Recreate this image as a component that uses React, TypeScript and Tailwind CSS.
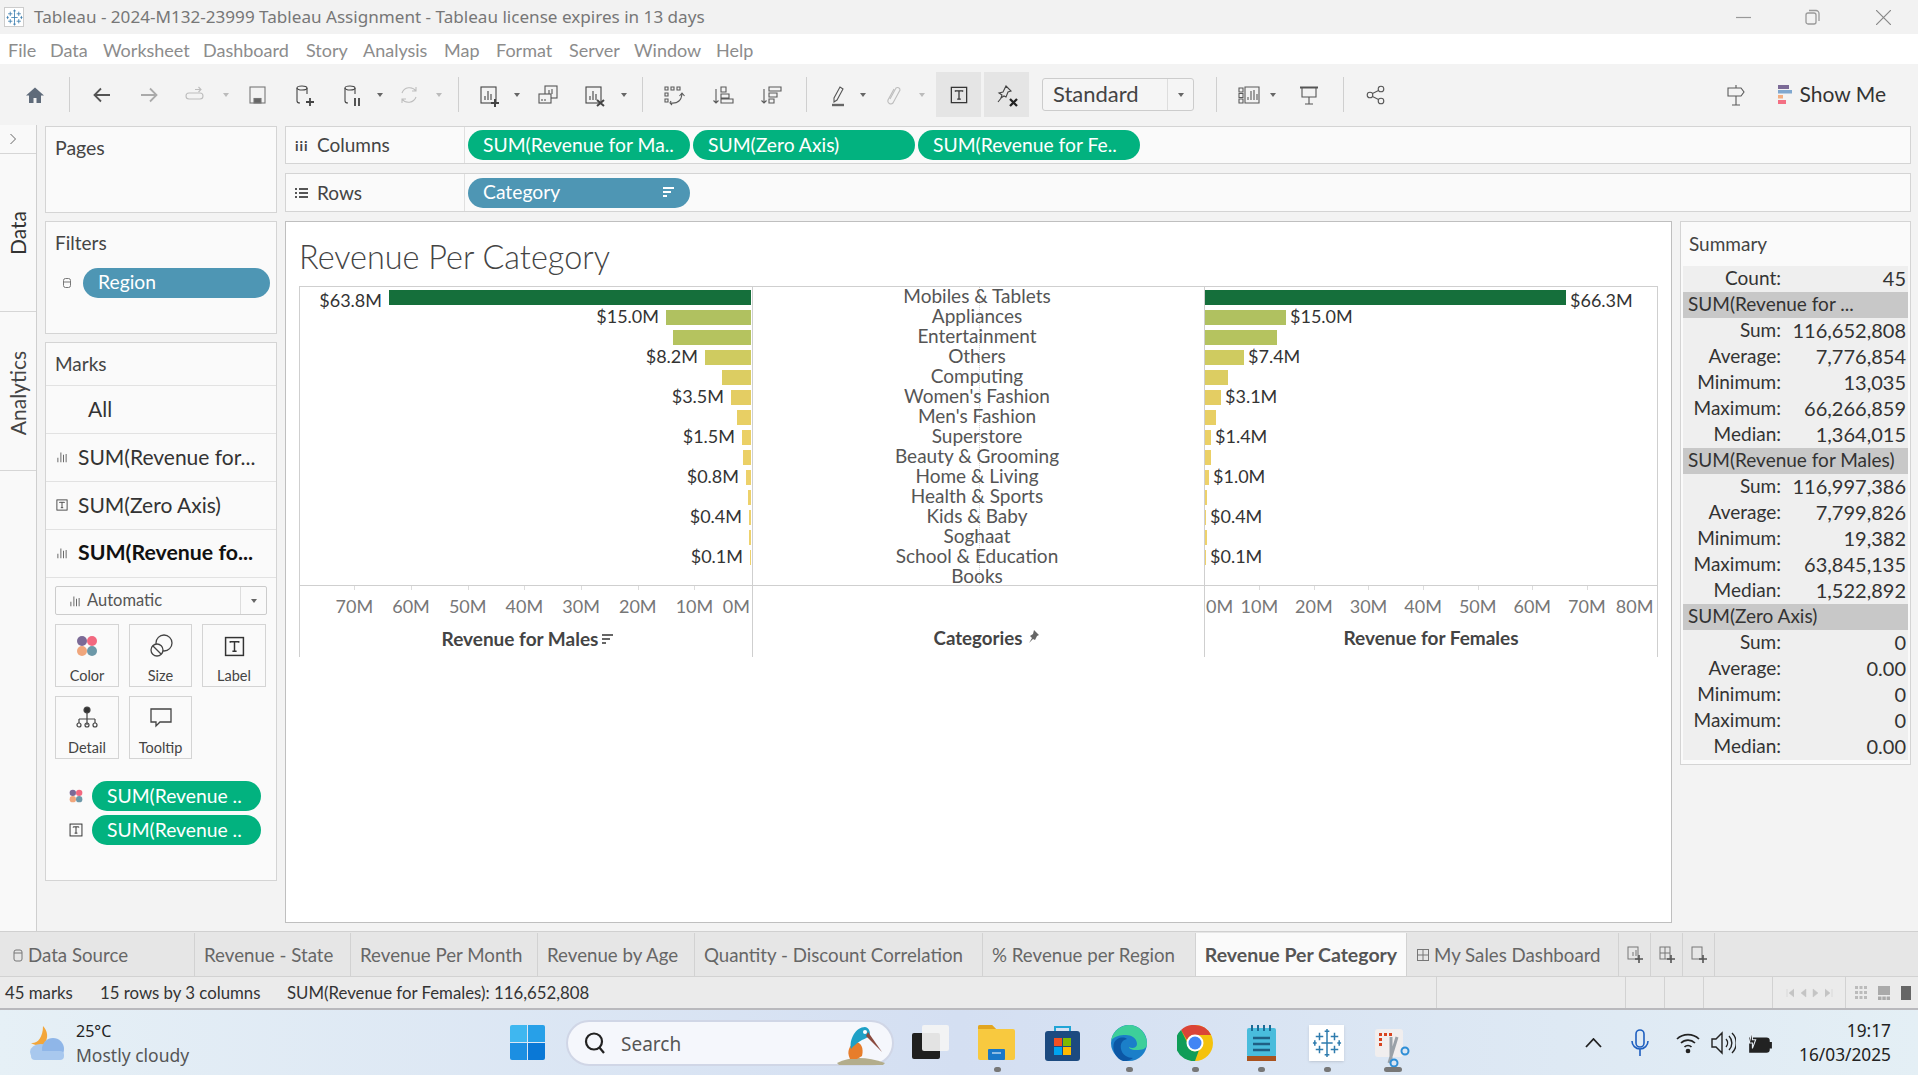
import React from "react";

type IP = { c?: string; s?: number; children?: React.ReactNode };
const I = ({ c = "#5a5a5a", s = 24, children }: IP) => (
  <svg width={s} height={s} viewBox="0 0 24 24" fill="none" stroke={c} strokeWidth={1.1} className="shrink-0">
    {children}
  </svg>
);
const Caret = ({ c = "#666" }: { c?: string }) => (
  <svg width="8" height="6" viewBox="0 0 8 6" className="shrink-0"><path d="M1 1h6L4 5z" fill={c} /></svg>
);
const Sep = ({ cls }: { cls: string }) => <div className={`w-px h-[35px] bg-[#cfcfcf] shrink-0 ${cls}`} />;

const Logo = ({ s = 20, c = "#3f7fb0" }: { s?: number; c?: string }) => (
  <svg width={s} height={s} viewBox="0 0 32 32" stroke={c} fill="none" strokeWidth={1.6}>
    <path d="M16 6v20M10 16h12M8 5v8M4 9h8M24 5v8M20 9h8M8 19v8M4 23h8M24 19v8M20 23h8M16 1v5M13.500 3.500h5M16 26v5M13.500 28.500h5M3 13v6M1 16h4M29 13v6M27 16h4" />
  </svg>
);
const BarsI = ({ s = 16 }: { s?: number }) => (
  <svg width={s} height={s} viewBox="0 0 16 16" stroke="#666" strokeWidth={1.3} className="shrink-0"><path d="M2.500 15V9M6.500 15V2M10 15V5M13.500 15V4" /></svg>
);
const TI = ({ s = 16, c = "#333" }: { s?: number; c?: string }) => (
  <svg width={s} height={s} viewBox="0 0 20 20" fill="none" stroke={c} strokeWidth={1.4} className="shrink-0"><rect x="1.500" y="1.500" width="17" height="17" /><path d="M6 6.500V5.500h8v1M10 5.500v9M8 14.500h4" /></svg>
);
const Dots = ({ s = 22 }: { s?: number }) => (
  <svg width={s} height={s} viewBox="0 0 22 22" className="shrink-0"><circle cx="6" cy="6" r="5" fill="#7b6a96" /><circle cx="16" cy="6" r="5" fill="#f2687f" /><circle cx="6" cy="16" r="5" fill="#f0a67c" /><circle cx="16" cy="16" r="5" fill="#6c98a8" /></svg>
);
const SortI = ({ c = "#fff" }: { c?: string }) => (
  <svg width="12" height="11" viewBox="0 0 12 11" fill={c} className="shrink-0"><rect width="11" height="2" /><rect y="4" width="8" height="2" /><rect y="8" width="4" height="2" /></svg>
);

const Pill = ({ children, cls }: { children: React.ReactNode; cls: string }) => (
  <div className={`rounded-full h-[30px] flex items-center text-white text-[19.300px] whitespace-nowrap shrink-0 ${cls}`}>{children}</div>
);

const male: [number, string][] = [
  [362, "$63.8M"], [85, "$15.0M"], [78, ""], [46, "$8.2M"], [29, ""], [20, "$3.5M"], [14, ""], [9, "$1.5M"], [8, ""], [5, "$0.8M"], [3, ""], [2, "$0.4M"], [2, ""], [1, "$0.1M"], [0, ""],
];
const female: [number, string][] = [
  [361, "$66.3M"], [81, "$15.0M"], [72, ""], [39, "$7.4M"], [23, ""], [16, "$3.1M"], [11, ""], [6, "$1.4M"], [6, ""], [4, "$1.0M"], [2, ""], [1, "$0.4M"], [2, ""], [1, "$0.1M"], [0, ""],
];
const colors = ["#156f3b", "#b0c160", "#b5c35f", "#cfcb60", "#dccd62", "#e4cd63", "#e8cf64", "#ebd066", "#ebd066", "#edd16a", "#edd16a", "#eed26c", "#eed26c", "#eed26c", "#eed26c"];
const cats = ["Mobiles & Tablets", "Appliances", "Entertainment", "Others", "Computing", "Women's Fashion", "Men's Fashion", "Superstore", "Beauty & Grooming", "Home & Living", "Health & Sports", "Kids & Baby", "Soghaat", "School & Education", "Books"];

type Sum = { h?: string; l?: string; v?: string };
const summary: Sum[] = [
  { l: "Count", v: "45" },
  { h: "SUM(Revenue for ..." },
  { l: "Sum", v: "116,652,808" }, { l: "Average", v: "7,776,854" }, { l: "Minimum", v: "13,035" }, { l: "Maximum", v: "66,266,859" }, { l: "Median", v: "1,364,015" },
  { h: "SUM(Revenue for Males)" },
  { l: "Sum", v: "116,997,386" }, { l: "Average", v: "7,799,826" }, { l: "Minimum", v: "19,382" }, { l: "Maximum", v: "63,845,135" }, { l: "Median", v: "1,522,892" },
  { h: "SUM(Zero Axis)" },
  { l: "Sum", v: "0" }, { l: "Average", v: "0.00" }, { l: "Minimum", v: "0" }, { l: "Maximum", v: "0" }, { l: "Median", v: "0.00" },
];

const tabs: [string, string][] = [
  ["Revenue - State", "w-[156px]"], ["Revenue Per Month", "w-[187px]"], ["Revenue by Age", "w-[157px]"], ["Quantity - Discount Correlation", "w-[288px]"], ["% Revenue per Region", "w-[213px]"],
];

const MarkBtn = ({ label, children, cls = "" }: { label: string; children: React.ReactNode; cls?: string }) => (
  <div className={`border border-[#d4d4d4] h-[63px] flex flex-col items-center pt-[7px] ${cls}`}>
    <div className="h-[28px] flex items-center">{children}</div>
    <div className="text-[14.500px] text-[#444] mt-[7px] leading-[18px]">{label}</div>
  </div>
);

const MarkRow = ({ icon, text, bold, cls = "" }: { icon?: React.ReactNode; text: string; bold?: boolean; cls?: string }) => (
  <div className={`h-[48px] border-b border-[#e2e2e2] flex items-center pb-[2px] ${bold ? "font-bold text-[#111] text-[21.300px]" : "text-[#333] text-[21px]"}`}>
    <div className="w-[33px] pl-[10px] shrink-0 flex">{icon}</div>
    <span className={`ml-[-1px] whitespace-nowrap ${cls}`}>{text}</span>
  </div>
);

export default function App() {
  return (
    <div className="w-[1918px] h-[1075px] overflow-hidden flex flex-col bg-[#f3f3f3] font-['Lato','Noto_Sans',sans-serif] text-[#333]">
      {/* title bar */}
      <div className="h-[34px] bg-[#f2f2f2] flex items-center shrink-0 text-[#777] font-['Noto_Sans',sans-serif] text-[17.100px]">
        <div className="ml-[4px] w-[20px] h-[20px] bg-white border border-[#ccc] flex items-center justify-center"><Logo s={17} /></div>
        <span className="ml-[10px] whitespace-nowrap">Tableau - 2024-M132-23999 Tableau Assignment - Tableau license expires in 13 days</span>
        <div className="ml-auto flex items-center pr-[27px]">
          <svg width="15" height="15" viewBox="0 0 15 15" stroke="#999" strokeWidth={1.2}><path d="M0 7.500h15" /></svg>
          <svg className="ml-[54px]" width="15" height="16" viewBox="0 0 15 16" fill="none" stroke="#999" strokeWidth={1.3}><rect x="1" y="4" width="10" height="11" rx="2" /><path d="M4 1.500h7a3 3 0 0 1 3 3V12" /></svg>
          <svg className="ml-[56px]" width="15" height="15" viewBox="0 0 15 15" stroke="#888" strokeWidth={1.2}><path d="M0 0l15 15M15 0L0 15" /></svg>
        </div>
      </div>
      {/* menu */}
      <div className="h-[30px] bg-white flex items-center shrink-0 text-[18px] text-[#8c8c8c] pl-[8px] pt-[2px]">
        {[["File", "w-[42px]"], ["Data", "w-[53px]"], ["Worksheet", "w-[100px]"], ["Dashboard", "w-[103px]"], ["Story", "w-[57px]"], ["Analysis", "w-[81px]"], ["Map", "w-[52px]"], ["Format", "w-[73px]"], ["Server", "w-[65px]"], ["Window", "w-[82px]"], ["Help", "w-[50px]"]].map(([t, w]) => (
          <span key={t} className={`${w} whitespace-nowrap`}>{t}</span>
        ))}
      </div>
      {/* toolbar */}
      <div className="h-[61px] flex items-center shrink-0 pl-[23px] pr-[32px]">
        <I c="#5f6b7a"><path d="M12 4.500 3 12.500h3v7.500h4.500v-5h3v5H18v-7.500h3z" fill="#5f6b7a" stroke="none" /></I>
        <Sep cls="ml-[22px]" />
        <div className="ml-[20px]"><I c="#555" ><path d="M20 12H5M11 5.500 4.500 12l6.500 6.500" strokeWidth={1.8} /></I></div>
        <div className="ml-[23px]"><I c="#aaa"><path d="M4 12h15M13 5.500l6.500 6.500-6.500 6.500" strokeWidth={1.8} /></I></div>
        <div className="ml-[22px]"><I c="#bdbdbd"><rect x="3" y="10" width="17" height="6" rx="3" /><path d="M12 6.500h6M15.500 4l2.500 2.500L15.500 9" /></I></div>
        <div className="ml-[15px]"><Caret c="#bbb" /></div>
        <div className="ml-[15px]"><I c="#777"><rect x="5" y="4" width="15" height="16" /><rect x="9" y="15.500" width="7" height="4.500" fill="#666" /></I></div>
        <div className="ml-[23px]"><I c="#444"><ellipse cx="10" cy="5" rx="5" ry="2" /><path d="M5 5v13q0 2 3 2M15 5v6" /><path d="M14 19h8M18 15v8" strokeWidth={1.8} /></I></div>
        <div className="ml-[24px]"><I c="#444"><ellipse cx="10" cy="5" rx="5" ry="2" /><path d="M5 5v13q0 2 3 2M15 5v6" /><path d="M15 15v8M19 15v8" strokeWidth={1.8} /></I></div>
        <div className="ml-[12px]"><Caret /></div>
        <div className="ml-[13px]"><I c="#bdbdbd"><path d="M5 10a8 8 0 0 1 14-2M19 14a8 8 0 0 1-14 2M19 4v4h-4M5 20v-4h4" /></I></div>
        <div className="ml-[14px]"><Caret c="#bbb" /></div>
        <Sep cls="ml-[15px]" />
        <div className="ml-[18px]"><I c="#444"><rect x="4" y="4" width="15" height="16" /><path d="M8 17v-4M11 17V8M14 17v-6" /><path d="M14 20h8M18 16v8" strokeWidth={2} /></I></div>
        <div className="ml-[12px]"><Caret /></div>
        <div className="ml-[15px]"><I c="#555"><rect x="9" y="3" width="12" height="12" /><rect x="3" y="11" width="12" height="9" fill="#f3f3f3" /><path d="M13 11V7M16 11V6M6 16v2M9 16v2" /></I></div>
        <div className="ml-[23px]"><I c="#444"><rect x="3" y="4" width="15" height="16" /><path d="M7 17v-4M10 17V8M13 17v-6" /><path d="M14 17l7 6M21 17l-7 6" strokeWidth={2} /></I></div>
        <div className="ml-[13px]"><Caret /></div>
        <Sep cls="ml-[14px]" />
        <div className="ml-[19px]"><I><path d="M3 4h3v3H3zM9 4h3v3H9zM15 4h3v3h-3zM3 10h3v3H3zM3 16h3v3H3z" /><path d="M9 20q10 1 11-9M17.500 13l2.500-3 2.500 3M9 18l-1 2 2 2" /></I></div>
        <div className="ml-[25px]"><I><path d="M5 6v14M2.500 17.500 5 20l2.500-2.500M10 4h5v5h-5zM10 11h8v4h-8zM10 16h12v4H10z" /></I></div>
        <div className="ml-[24px]"><I><path d="M5 6v14M2.500 17.500 5 20l2.500-2.500M10 4h12v4H10zM10 10h8v4h-8zM10 16h5v4h-5z" /></I></div>
        <Sep cls="ml-[23px]" />
        <div className="ml-[19px]"><I c="#555"><path d="M8 15 14 4l3 2-6 11-3 2z" /><path d="M6 22h12" strokeWidth={2.400} stroke="#666" /></I></div>
        <div className="ml-[9px]"><Caret /></div>
        <div className="ml-[15px]"><I c="#bdbdbd"><path d="M8 16 14 5a2.500 2.500 0 0 1 4 2l-7 13a3 3 0 0 1-5-3l6-11" /></I></div>
        <div className="ml-[12px]"><Caret c="#bbb" /></div>
        <div className="ml-[10px] w-[45px] h-[45px] bg-[#e5e5e5] flex items-center justify-center shrink-0"><TI s={18} /></div>
        <div className="ml-[3px] w-[45px] h-[45px] bg-[#e5e5e5] flex items-center justify-center shrink-0"><I c="#444"><path d="M11 3l5 5-3 1-2 5-2-1-3 2 1-3-3-2 4-1zM3 19l4-5" /><path d="M15 16l7 7M22 16l-7 7" strokeWidth={2.300} stroke="#222" /></I></div>
        <div className="ml-[13px] w-[152px] h-[33px] border border-[#ccc] rounded-[3px] flex items-center bg-[#f5f5f5] shrink-0">
          <span className="pl-[10px] pb-[2px] text-[22px] text-[#444] flex-1">Standard</span>
          <div className="w-[26px] h-full border-l border-[#ddd] flex items-center justify-center"><Caret /></div>
        </div>
        <Sep cls="ml-[22px]" />
        <div className="ml-[20px]"><I><path d="M2 5h4v4H2zM2 10.500h4v4H2zM2 16h4v4H2zM8 4h14v16H8z" /><path d="M11 17v-3M14 17V8M17 17V7M20 17v-6" /></I></div>
        <div className="ml-[8px]"><Caret /></div>
        <div className="ml-[20px]"><I c="#555"><path d="M3 4.500h18" strokeWidth={2} /><path d="M5 5v9h14V5M12 14v7M8 21h8" /></I></div>
        <Sep cls="ml-[22px]" />
        <div className="ml-[20px]"><I c="#555"><circle cx="6" cy="12" r="2.800" /><circle cx="17" cy="6" r="2.800" /><circle cx="17" cy="18" r="2.800" /><path d="M8.500 10.500 14.500 7.500M8.500 13.500l6 3" /></I></div>
        <div className="ml-auto"><I><path d="M12 2v3M12 13v9M8 22h8M4 5h13l3 4-3 4H4z" /></I></div>
        <svg className="ml-[30px]" width="14" height="19" viewBox="0 0 14 19"><rect width="11" height="4" fill="#7b6a96" /><rect y="5" width="14" height="3.500" fill="#7fa7cf" /><rect y="10" width="5" height="3.500" fill="#f3ad80" /><rect y="15" width="8" height="4" fill="#f36f83" /></svg>
        <span className="ml-[8px] pb-[2px] text-[21px] text-[#333] whitespace-nowrap">Show Me</span>
      </div>

      {/* main */}
      <div className="h-[807px] shrink-0 flex border-b border-[#d0d0d0]">
        {/* strip */}
        <div className="w-[37px] shrink-0 bg-[#f9f9f9] border-r border-[#cfcfcf] flex flex-col">
          <div className="h-[29px] shrink-0 border-b border-[#d6d6d6] flex items-center pl-[9px]">
            <svg width="8" height="12" viewBox="0 0 8 12" fill="none" stroke="#666" strokeWidth={1}><path d="M1.500 1l5 5-5 5" /></svg>
          </div>
          <div className="h-[158px] shrink-0 border-b border-[#d6d6d6] flex items-center justify-center">
            <span className="[writing-mode:vertical-rl] rotate-180 text-[21px]">Data</span>
          </div>
          <div className="h-[159px] shrink-0 border-b border-[#d6d6d6] flex items-center justify-center pt-[4px]">
            <span className="[writing-mode:vertical-rl] rotate-180 text-[21px] text-[#444]">Analytics</span>
          </div>
        </div>
        {/* sidebar */}
        <div className="w-[232px] ml-[8px] shrink-0 flex flex-col gap-[8px] pt-[1px]">
          <div className="h-[87px] shrink-0 bg-[#fafafa] border border-[#d4d4d4] pl-[9px] pt-[6px] text-[19.500px] text-[#444]">Pages</div>
          <div className="h-[113px] shrink-0 bg-[#fafafa] border border-[#d4d4d4] pl-[9px] pt-[7px] text-[19px] text-[#444]">
            <div>Filters</div>
            <div className="flex items-center mt-[10px]">
              <svg width="12" height="14" viewBox="0 0 12 14" fill="none" stroke="#777" className="ml-[6px]"><rect x="2.500" y="2.500" width="7" height="9" rx="2" /><path d="M3 6h6" /></svg>
              <Pill cls="ml-[10px] w-[187px] bg-[#4e96b4] pl-[15px]">Region</Pill>
            </div>
          </div>
          <div className="h-[539px] shrink-0 bg-[#fafafa] border border-[#d4d4d4]">
            <div className="h-[43px] border-b border-[#e2e2e2] pl-[9px] flex items-center text-[19px] text-[#444]">Marks</div>
            <MarkRow text="All" icon={<span className="w-[8px]" />} cls="ml-[9px]" />
            <MarkRow text="SUM(Revenue for..." icon={<BarsI s={12} />} />
            <MarkRow text="SUM(Zero Axis)" icon={<TI s={12} />} />
            <MarkRow text="SUM(Revenue fo..." bold icon={<BarsI s={12} />} />
            <div className="px-[9px]">
              <div className="mt-[8px] h-[29px] border border-[#ccc] rounded-[2px] flex items-center text-[16.500px] text-[#555]">
                <div className="ml-[13px]"><BarsI s={12} /></div>
                <span className="ml-[6px] flex-1">Automatic</span>
                <div className="w-[26px] h-full border-l border-[#ddd] flex items-center justify-center"><Caret /></div>
              </div>
              <div className="grid grid-cols-[64px_63px_64px] gap-x-[10px] gap-y-[9px] mt-[9px]">
                <MarkBtn label="Color"><Dots /></MarkBtn>
                <MarkBtn label="Size">
                  <svg width="24" height="24" viewBox="0 0 24 24" fill="none" stroke="#444" strokeWidth={1.3}><circle cx="15" cy="9" r="8" /><circle cx="8" cy="16" r="6" fill="#fafafa" /><path d="M4 12l8 8" /></svg>
                </MarkBtn>
                <MarkBtn label="Label"><TI s={21} /></MarkBtn>
                <MarkBtn label="Detail">
                  <svg width="22" height="24" viewBox="0 0 22 24" fill="none" stroke="#444" strokeWidth={1.2}><circle cx="11" cy="4" r="3" fill="#333" /><path d="M11 7v12M3 13h16M3 13v4M19 13v4" /><circle cx="3" cy="19" r="2" /><circle cx="11" cy="19" r="2" /><circle cx="19" cy="19" r="2" /></svg>
                </MarkBtn>
                <MarkBtn label="Tooltip">
                  <svg width="24" height="22" viewBox="0 0 24 22" fill="none" stroke="#444" strokeWidth={1.3}><path d="M2 2h20v13H11l-4 4v-4H2z" /></svg>
                </MarkBtn>
              </div>
              <div className="flex items-center mt-[22px]">
                <div className="ml-[14px]"><Dots s={14} /></div>
                <Pill cls="ml-[9px] w-[169px] bg-[#02b27f] pl-[15px]">SUM(Revenue ..</Pill>
              </div>
              <div className="flex items-center mt-[4px]">
                <div className="ml-[14px]"><TI s={14} /></div>
                <Pill cls="ml-[9px] w-[169px] bg-[#02b27f] pl-[15px]">SUM(Revenue ..</Pill>
              </div>
            </div>
          </div>
        </div>
        {/* center+right */}
        <div className="w-[1626px] ml-[8px] shrink-0 flex flex-col pt-[1px] min-h-0">
          <div className="h-[38px] shrink-0 bg-[#fafafa] border border-[#d4d4d4] flex items-center">
            <div className="w-[179px] h-full border-r border-[#e0e0e0] flex items-center text-[19px] text-[#444] pl-[9px]">
              <span className="text-[14px] w-[22px] tracking-[1px] text-[#444] font-bold">iii</span>Columns
            </div>
            <div className="flex gap-[3px] ml-[3px]">
              <Pill cls="w-[222px] bg-[#02b27f] pl-[15px]">SUM(Revenue for Ma..</Pill>
              <Pill cls="w-[222px] bg-[#02b27f] pl-[15px]">SUM(Zero Axis)</Pill>
              <Pill cls="w-[222px] bg-[#02b27f] pl-[15px]">SUM(Revenue for Fe..</Pill>
            </div>
          </div>
          <div className="h-[39px] shrink-0 mt-[9px] bg-[#fafafa] border border-[#d4d4d4] flex items-center">
            <div className="w-[179px] h-full border-r border-[#e0e0e0] flex items-center text-[19px] text-[#444] pl-[9px] pt-[2px]">
              <svg width="13" height="11" viewBox="0 0 13 11" fill="#555" className="mr-[9px]"><path d="M0 0h2v2H0zM4 0h9v2H4zM0 4h2v2H0zM4 4h9v2H4zM0 8h2v2H0zM4 8h9v2H4z" /></svg>Rows
            </div>
            <Pill cls="ml-[3px] w-[222px] bg-[#4e96b4] pl-[15px] pr-[15px] justify-between">Category<SortI /></Pill>
          </div>
          <div className="flex-1 flex mt-[9px] mb-[8px] min-h-0">
            {/* viz */}
            <div className="w-[1387px] shrink-0 bg-white border border-[#bfbfbf] pl-[13px]">
              <div className="h-[64px] pt-[15px] text-[32.400px] font-light text-[#444] leading-[40px] whitespace-nowrap">Revenue Per Category</div>
              <div className="w-[1359px] flex border-t border-r border-[#cfcfcf]">
                {/* males */}
                <div className="w-[453px] border-l border-[#cfcfcf] shrink-0">
                  <div className="h-[299px] border-b border-[#cfcfcf]">
                    {male.map(([w, l], i) => (
                      <div key={i} className="h-[20px] flex items-center justify-end pr-[1px]">
                        {l && <span className={`text-[18px] mr-[7px] whitespace-nowrap ${i === 0 ? "translate-y-[3px]" : "translate-y-[-1px]"}`}>{l}</span>}
                        <div className="h-[15px]" style={{ width: w, background: colors[i] }} />
                      </div>
                    ))}
                  </div>
                  <div className="h-[71px]">
                    <div className="flex pl-[26px] pt-[8px] text-[18px] text-[#777] leading-[24px]">
                      {["70M", "60M", "50M", "40M", "30M", "20M", "10M"].map((t) => (
                        <div key={t} className="relative w-[56.700px] text-center"><span className="absolute top-[-8px] left-1/2 w-px h-[4px] bg-[#dcdcdc]" />{t}</div>
                      ))}
                      <div className="w-[26px] text-center">0M</div>
                    </div>
                    <div className="flex items-center justify-center text-[19px] font-bold text-[#444] mt-[7px] gap-[4px] pl-[4px]">Revenue for Males<SortI c="#666" /></div>
                  </div>
                </div>
                {/* cats */}
                <div className="w-[452px] border-l border-[#cfcfcf] shrink-0 relative">
                  <div className="absolute left-1/2 top-0 h-[299px] border-l border-dotted border-[#ccc]" />
                  <div className="h-[299px] border-b border-[#cfcfcf] relative">
                    {cats.map((c) => (
                      <div key={c} className="h-[20px] flex items-center justify-center text-[19px] text-[#555] whitespace-nowrap pr-[3px] pb-[2px]">{c}</div>
                    ))}
                  </div>
                  <div className="h-[71px] pt-[41px] flex items-start justify-center gap-[5px] text-[18.700px] font-bold text-[#444] pl-[16px]">
                    <span className="leading-[22px]">Categories</span>
                    <svg width="12" height="14" viewBox="0 0 12 14" fill="#666" className="mt-[3px]"><path d="M7 0l5 5-2 1-2 4-2-1-4 4 3-5-2-2 3-2z" /></svg>
                  </div>
                </div>
                {/* females */}
                <div className="flex-1 border-l border-[#cfcfcf] min-w-0">
                  <div className="h-[299px] border-b border-[#cfcfcf]">
                    {female.map(([w, l], i) => (
                      <div key={i} className="h-[20px] flex items-center">
                        <div className="h-[15px]" style={{ width: w, background: colors[i] }} />
                        {l && <span className={`text-[18px] ml-[4px] whitespace-nowrap ${i === 0 ? "translate-y-[3px]" : "translate-y-[-1px]"}`}>{l}</span>}
                      </div>
                    ))}
                  </div>
                  <div className="h-[71px]">
                    <div className="flex pt-[8px] pl-[1px] text-[18px] text-[#777] leading-[24px] whitespace-nowrap">
                      <div className="w-[26px] text-center">0M</div>
                      {["10M", "20M", "30M", "40M", "50M", "60M", "70M"].map((t) => (
                        <div key={t} className="relative w-[54.600px] text-center shrink-0"><span className="absolute top-[-8px] left-1/2 w-px h-[4px] bg-[#dcdcdc]" />{t}</div>
                      ))}
                      <div className="w-[41px] text-center shrink-0">80M</div>
                    </div>
                    <div className="text-center text-[19px] font-bold text-[#444] mt-[9px] leading-[22px]">Revenue for Females</div>
                  </div>
                </div>
              </div>
            </div>
            {/* summary */}
            <div className="w-[231px] ml-[8px] h-[544px] bg-[#fafafa] border border-[#d4d4d4] px-[2px]">
              <div className="h-[44px] flex items-center pl-[6px] text-[19px] text-[#444]">Summary</div>
              {summary.map((r, i) =>
                r.h ? (
                  <div key={i} className="h-[26px] bg-[#c8c8c8] pl-[5px] pb-[2px] flex items-center text-[19px] text-[#333] whitespace-nowrap">{r.h}</div>
                ) : (
                  <div key={i} className="h-[26px] bg-[#efefef] pb-[2px] flex items-center text-[19px] text-[#333] whitespace-nowrap">
                    <span className="w-[98px] text-right shrink-0">{r.l}:</span>
                    <span className="flex-1 text-right pr-[2px] text-[20px]">{r.v}</span>
                  </div>
                ),
              )}
            </div>
          </div>
        </div>
      </div>

      {/* tabs */}
      <div className="h-[45px] shrink-0 bg-[#e6e6e6] border-b border-[#d2d2d2] flex text-[18.700px] text-[#666] pt-[1px]">
        <div className="w-[195px] border-r border-[#d2d2d2] flex items-center pl-[13px] gap-[5px] pt-[1px]">
          <svg width="10" height="13" viewBox="0 0 10 13" fill="none" stroke="#777"><rect x="1" y="1" width="8" height="11" rx="2" /><path d="M1 4h8" /></svg>Data Source
        </div>
        {tabs.map(([t, w]) => (
          <div key={t} className={`${w} border-r border-[#d2d2d2] flex items-center pl-[9px] whitespace-nowrap pt-[1px]`}>{t}</div>
        ))}
        <div className="w-[211px] bg-[#fafafa] border-r border-[#d2d2d2] flex items-center justify-center font-bold text-[#555] whitespace-nowrap text-[19.500px]">Revenue Per Category</div>
        <div className="w-[212px] border-r border-[#d2d2d2] flex items-center pl-[10px] gap-[5px] whitespace-nowrap pt-[1px]">
          <svg width="12" height="12" viewBox="0 0 12 12" fill="none" stroke="#777"><rect x="0.500" y="0.500" width="11" height="11" /><path d="M6 0v12M0 6h12" /></svg>My Sales Dashboard
        </div>
        {[0, 1, 2].map((k) => (
          <div key={k} className="w-[32px] border-r border-[#d2d2d2] flex items-center justify-center">
            <svg width="16" height="18" viewBox="0 0 16 18" fill="none" stroke="#777"><rect x="1" y="1" width="10" height="12" /><path d="M6 10V6M9 10V4" opacity={k === 0 ? 1 : 0} /><path d="M1 7h10M6 1v12" opacity={k === 1 ? 1 : 0} /><path d="M12 9v8M8 13h8" strokeWidth={1.600} stroke="#555" /></svg>
          </div>
        ))}
      </div>
      {/* status */}
      <div className="h-[31px] shrink-0 bg-[#ebebeb] flex items-center text-[16.800px] text-[#333] whitespace-nowrap">
        <span className="ml-[5px] w-[95px]">45 marks</span>
        <span className="w-[187px]">15 rows by 3 columns</span>
        <span className="w-[1149px]">SUM(Revenue for Females): 116,652,808</span>
        <div className="w-[189px] h-full border-l border-[#d2d2d2]" />
        <div className="w-[39px] h-full border-l border-[#d2d2d2]" />
        <div className="w-[39px] h-full border-l border-[#d2d2d2]" />
        <div className="w-[69px] h-full border-l border-[#d2d2d2]" />
        <div className="w-[73px] h-full border-l border-[#d2d2d2] flex items-center justify-around px-[10px]">
          {["M1 1v8M8 1 3 5l5 4z", "M7 1 2 5l5 4z", "M1 1l5 4-5 4z", "M7 1v8M0 1l5 4-5 4z"].map((d) => (
            <svg key={d} width="8" height="10" viewBox="0 0 8 10" fill="#c4c4c4" stroke="#c4c4c4" strokeWidth={0.5}><path d={d} /></svg>
          ))}
        </div>
        <div className="flex-1 h-full border-l border-[#d2d2d2] flex items-center pl-[9px] gap-[11px]">
          <svg width="12" height="14" viewBox="0 0 12 14" fill="#bbb"><path d="M0 0h3v3H0zM4.500 0h3v3h-3zM9 0h3v3H9zM0 5h3v3H0zM4.500 5h3v3h-3zM9 5h3v3H9zM0 10h3v3H0zM4.500 10h3v3h-3zM9 10h3v3H9z" /></svg>
          <svg width="12" height="14" viewBox="0 0 12 14" fill="#aaa"><path d="M0 0h12v9H0zM0 10.500h3.500V14H0zM4.300 10.500h3.500V14H4.300zM8.600 10.500H12V14H8.600z" /></svg>
          <div className="w-[10px] h-[14px] bg-[#666]" />
        </div>
      </div>
      <div className="h-[2px] shrink-0 bg-[#b9b9bd]" />
      {/* taskbar */}
      <div className="h-[65px] shrink-0 bg-gradient-to-r from-[#e6f0f6] via-[#d4dff2] to-[#e4eff5] flex items-center relative font-['Noto_Sans',sans-serif]">
        <svg className="ml-[29px] shrink-0" width="36" height="36" viewBox="0 0 36 36">
          <path d="M14 1c4 4 7 12 0 19-4 1-9 0-12-2 6 1 12-5 12-17z" fill="#f3a63a" />
          <ellipse cx="12" cy="27" rx="11" ry="8" fill="#a8c8ee" />
          <ellipse cx="24" cy="24" rx="11" ry="11" fill="#8fb6e8" />
          <rect x="2" y="26" width="33" height="9" rx="4" fill="#a8c8ee" />
        </svg>
        <div className="ml-[11px] w-[112px] shrink-0 flex flex-col text-[17.500px] leading-[24px] whitespace-nowrap">
          <span className="text-[#222] text-[16px]">25°C</span>
          <span className="text-[#555]">Mostly cloudy</span>
        </div>
        <div className="ml-[322px] w-[35px] h-[35px] shrink-0 grid grid-cols-2 grid-rows-2 gap-[1px]">
          <div className="bg-[#3fb7f0] rounded-tl-[2px]" /><div className="bg-[#27a0e8] rounded-tr-[2px]" />
          <div className="bg-[#1c8fe2] rounded-bl-[2px]" /><div className="bg-[#0a78d6] rounded-br-[2px]" />
        </div>
        <div className="ml-[21px] w-[328px] h-[46px] shrink-0 rounded-full bg-[#f5f7fc] border-2 border-[#d0d6e6] flex items-center pl-[15px] mt-[1px]">
          <svg width="24" height="24" viewBox="0 0 24 24" fill="none" stroke="#222" strokeWidth={2.200}><circle cx="11" cy="10.500" r="8" /><path d="M16 16l5 6" /></svg>
          <span className="ml-[14px] pt-[2px] text-[19px] text-[#555]">Search</span>
          <svg className="ml-auto mr-[3px]" width="56" height="44" viewBox="0 0 56 44">
            <path d="M4 42q20-10 48 0l-2 2H6z" fill="#b3ad8c" />
            <path d="M17 38c-4-8 0-14 5-17 6 0 9 6 7 14l-5 3z" fill="#e77d2b" />
            <path d="M18 28c-2-10 5-22 14-22 5 1 6 7 4 10-6 2-13 6-18 12z" fill="#1ea0c6" />
            <path d="M35 11l14 20-16-16z" fill="#8a4a3e" />
            <circle cx="32" cy="11" r="2" fill="#fff" />
          </svg>
        </div>
        <svg className="ml-[18px] shrink-0" width="37" height="35" viewBox="0 0 37 35">
          <rect x="0" y="8" width="28" height="26" rx="2" fill="#1f1f1f" />
          <rect x="10" y="0" width="27" height="26" rx="2" fill="#f4f4f4" opacity={0.92} />
        </svg>
        <svg className="ml-[29px] shrink-0" width="37" height="35" viewBox="0 0 37 35">
          <path d="M0 2q0-2 2-2h12l4 4h17q2 0 2 2v27q0 2-2 2H2q-2 0-2-2z" fill="#f8c93f" />
          <path d="M0 2q0-2 2-2h12l4 4H0z" fill="#e2a520" />
          <rect x="10" y="24" width="17" height="11" rx="1" fill="#1a78c8" />
          <path d="M14 28h9" stroke="#fff" />
        </svg>
        <svg className="ml-[30px] shrink-0" width="35" height="36" viewBox="0 0 35 36">
          <path d="M10 7V2h15v5" fill="none" stroke="#21a5d6" strokeWidth={2} />
          <rect y="6" width="35" height="30" rx="3" fill="#1c4a80" />
          <rect x="9" y="13" width="8" height="8" fill="#f25022" /><rect x="18" y="13" width="8" height="8" fill="#7fba00" />
          <rect x="9" y="22" width="8" height="8" fill="#00a4ef" /><rect x="18" y="22" width="8" height="8" fill="#ffb900" />
        </svg>
        <svg className="ml-[31px] shrink-0" width="36" height="36" viewBox="0 0 36 36">
          <circle cx="18" cy="18" r="18" fill="#1b7fc9" />
          <path d="M0 16C2 4 12 0 18 0c10 0 18 8 18 19 0 5-5 6-11 6-5 0-7-2-7-3 3 2 8 1 8-3 0-6-6-9-11-9C9 10 3 11 0 16z" fill="#3dcf9a" />
          <path d="M12 36c-8-3-11-12-9-18 2-5 9-7 13-4-5 1-7 5-6 10 1 6 7 9 12 9-3 2-7 4-10 3z" fill="#0c57a5" />
        </svg>
        <svg className="ml-[30px] shrink-0" width="36" height="36" viewBox="0 0 36 36">
          <circle cx="18" cy="18" r="18" fill="#f4c20d" />
          <path d="M18 0a18 18 0 0 1 16 10H18a8 8 0 0 0-8 5L4 5A18 18 0 0 1 18 0z" fill="#db4437" />
          <path d="M4 5l8 16 6 15A18 18 0 0 1 4 5z" fill="#0f9d58" />
          <path d="M10 22a9 9 0 0 0 12 3l-4 11A18 18 0 0 1 4 26z" fill="#0f9d58" />
          <circle cx="18" cy="18" r="8.500" fill="#fff" /><circle cx="18" cy="18" r="6.500" fill="#4285f4" />
        </svg>
        <svg className="ml-[34px] shrink-0" width="29" height="36" viewBox="0 0 29 36">
          <rect y="3" width="29" height="29" rx="2" fill="#49bcdc" /><rect y="31" width="29" height="5" fill="#a9531f" />
          <path d="M5 0v6M11 0v6M17 0v6M23 0v6" stroke="#1c6c96" strokeWidth={2} />
          <path d="M6 13h17M6 19h17M6 25h17" stroke="#1f5f84" strokeWidth={2.500} />
        </svg>
        <div className="ml-[33px] w-[35px] h-[36px] shrink-0 bg-white shadow-sm flex items-center justify-center"><Logo s={30} c="#2f7cae" /></div>
        <svg className="ml-[31px] mt-[12px] shrink-0" width="38" height="40" viewBox="0 0 38 40">
          <rect width="28" height="28" rx="3" fill="#f1eeee" />
          <path d="M4 4h3v3H4zM9 4h3v3H9zM14 4h3v3h-3zM4 9h3v3H4zM4 14h3v3H4z" fill="#d8431e" />
          <path d="M16 8v22M22 8 14 34" stroke="#9aa1a8" strokeWidth={3} fill="none" />
          <circle cx="30" cy="22" r="3.500" fill="none" stroke="#2e8ed6" strokeWidth={2} />
          <circle cx="19" cy="34" r="3.500" fill="none" stroke="#2e8ed6" strokeWidth={2} />
        </svg>
        <svg className="ml-[172px] shrink-0" width="17" height="10" viewBox="0 0 17 10" fill="none" stroke="#222" strokeWidth={1.800}><path d="M1 9l7.500-8L16 9" /></svg>
        <svg className="ml-[29px] shrink-0" width="18" height="28" viewBox="0 0 18 28" fill="none" stroke="#1e5fc0" strokeWidth={1.600}><rect x="5" y="1" width="8" height="17" rx="4" /><path d="M1 12a8 8 0 0 0 16 0M9 20v7" /></svg>
        <svg className="ml-[27px] shrink-0" width="24" height="22" viewBox="0 0 24 22" fill="none" stroke="#222" strokeWidth={1.700}><path d="M1 7a16 16 0 0 1 22 0M5 11a10 10 0 0 1 14 0M8.500 15a5 5 0 0 1 7 0" /><circle cx="12" cy="19" r="1.500" fill="#222" /></svg>
        <svg className="ml-[11px] shrink-0" width="25" height="24" viewBox="0 0 25 24" fill="none" stroke="#222" strokeWidth={1.400}><path d="M1 8v8h4l6 6V2L5 8zM15 8a6 6 0 0 1 0 8M18 5a10 10 0 0 1 0 14M21 2a14 14 0 0 1 0 20" /></svg>
        <svg className="ml-[11px] shrink-0" width="26" height="26" viewBox="0 0 24 24" fill="#222"><path d="M2 7h16a3 3 0 0 1 3 3v1h2v6h-2v1a3 3 0 0 1-3 3H2z" /><path d="M5 0v9h3l-3 8v-5H2z" stroke="#eaf0f7" /></svg>
        <div className="absolute right-[27px] top-0 h-full flex flex-col justify-center items-end text-[17.300px] leading-[24px] text-[#222]">
          <span>19:17</span><span>16/03/2025</span>
        </div>
        {/* running-app dots */}
        <div className="absolute bottom-[3px] left-[994px] w-[7px] h-[5px] rounded-full bg-[#777]" />
        <div className="absolute bottom-[3px] left-[1126px] w-[7px] h-[5px] rounded-full bg-[#777]" />
        <div className="absolute bottom-[3px] left-[1192px] w-[7px] h-[5px] rounded-full bg-[#777]" />
        <div className="absolute bottom-[3px] left-[1258px] w-[7px] h-[5px] rounded-full bg-[#777]" />
        <div className="absolute bottom-[3px] left-[1324px] w-[7px] h-[5px] rounded-full bg-[#777]" />
        <div className="absolute bottom-[3px] left-[1384px] w-[18px] h-[5px] rounded-full bg-[#777]" />
      </div>
    </div>
  );
}
